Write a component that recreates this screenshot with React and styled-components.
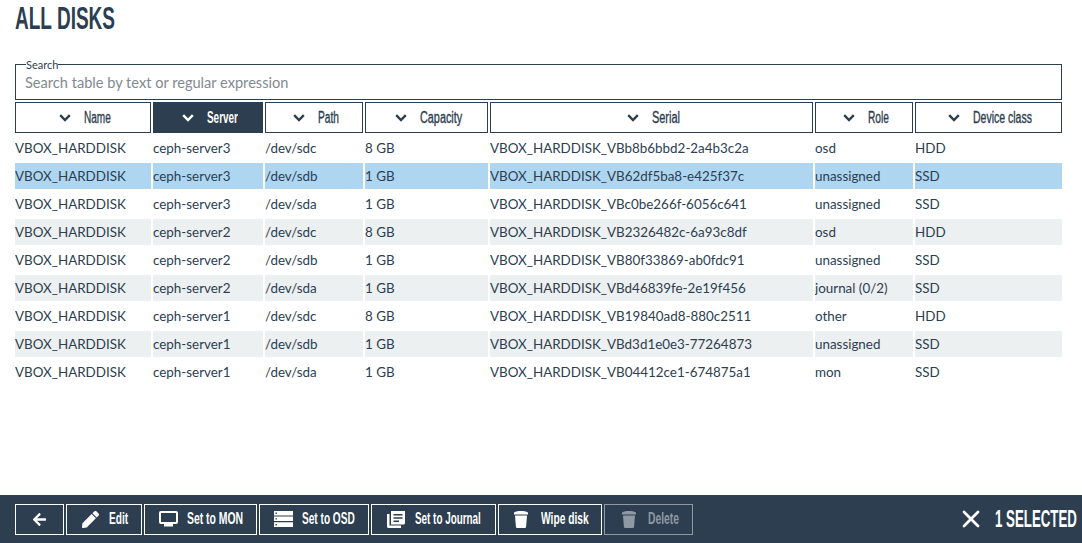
import React from "react";
import styled, { createGlobalStyle } from "styled-components";
import { FaArrowLeft, FaPen } from "react-icons/fa";
import { X } from "lucide-react";

const colors = {
	navy: "#2c3e50",
	selected: "#aed6f1",
	stripe: "#ecf0f1",
	muted: "#8f99a3"
};

const GlobalStyle = createGlobalStyle`
	html, body {
		margin: 0;
		padding: 0;
		background: #fff;
		font-family: "Lato", sans-serif;
		color: ${colors.navy};
	}
`;

const Page = styled.div`
	height: 543px;
	display: flex;
	flex-direction: column;
	overflow: hidden;
`;

const Content = styled.main`
	flex: 1;
	padding: 0 20px 0 15px;
`;

/* no condensed family is installed, so the headline font gets squeezed to its measured width */
const FitBox = styled.span`
	display: inline-block;
	flex: none;
	width: ${(p) => p.$width}px;
	white-space: nowrap;
	text-align: left;
`;

const FitInner = styled.span`
	display: inline-block;
	transform-origin: left center;
`;

const FitText = ({ width, children }) => (
	<FitBox $width={width}>
		<FitInner
			ref={(el) => {
				if (el) el.style.transform = `scaleX(${width / el.offsetWidth})`;
			}}
		>
			{children}
		</FitInner>
	</FitBox>
);

const Title = styled.h1`
	margin: 0;
	height: 59px;
	box-sizing: border-box;
	padding-top: 2px;
	font: 700 31px/34px "Liberation Sans", sans-serif;
`;

const SearchBox = styled.fieldset`
	margin: 0;
	padding: 0 9px;
	height: 41px;
	box-sizing: border-box;
	border: 1px solid ${colors.navy};
	min-width: 0;
`;

const SearchLegend = styled.legend`
	padding: 0;
	margin-left: 1px;
	font-size: 11px;
	line-height: 11px;
`;

const SearchInput = styled.input`
	display: block;
	width: 100%;
	border: 0;
	outline: 0;
	padding: 0;
	height: 24px;
	background: transparent;
	font: 400 14.6px "Lato", sans-serif;
	color: ${colors.navy};
	&::placeholder {
		color: #7f8a93;
		opacity: 1;
	}
`;

const Table = styled.table`
	table-layout: fixed;
	width: 1051px;
	margin: 0 -2px;
	border-collapse: separate;
	border-spacing: 2px;
`;

const HeaderCell = styled.th`
	height: 31px;
	box-sizing: border-box;
	padding: 0 0 0 3px;
	border: 1px solid ${colors.navy};
	background: ${(p) => (p.$active ? colors.navy : "#fff")};
	color: ${(p) => (p.$active ? "#fff" : colors.navy)};
	font: ${(p) => (p.$active ? 700 : 400)} 16px "Liberation Sans", sans-serif;
	-webkit-text-stroke: ${(p) => (p.$active ? "0" : "0.35px")};
`;

const HeaderInner = styled.span`
	display: flex;
	align-items: center;
	justify-content: center;
	gap: 13px;
`;

const Row = styled.tr`
	background: ${(p) => (p.$selected ? colors.selected : p.$striped ? colors.stripe : "#fff")};
`;

const Cell = styled.td`
	height: 26px;
	padding: 0;
	background: inherit;
	font-size: 13.4px;
	white-space: nowrap;
	overflow: hidden;
`;

const Footer = styled.footer`
	height: 48px;
	background: ${colors.navy};
	display: flex;
	align-items: center;
	justify-content: space-between;
	padding: 0 5px 0 15px;
	color: #fff;
`;

const Actions = styled.div`
	display: flex;
	gap: 2px;
`;

const ActionButton = styled.button`
	height: 31px;
	box-sizing: border-box;
	width: ${(p) => p.$width}px;
	padding: 0 0 0 ${(p) => p.$inset || 0}px;
	display: flex;
	align-items: center;
	justify-content: center;
	gap: ${(p) => p.$gap}px;
	background: transparent;
	border: 1px solid ${(p) => (p.disabled ? colors.muted : "#fff")};
	color: ${(p) => (p.disabled ? colors.muted : "#fff")};
	font: 700 16px "Liberation Sans", sans-serif;
`;

const Selection = styled.div`
	display: flex;
	align-items: center;
	gap: 10px;
	font: 700 23px "Liberation Sans", sans-serif;
`;

const SortIcon = () => (
	<svg width="12" height="8" viewBox="0 0 12 8" fill="none">
		<path d="M1.200 1.200L6 6l4.800-4.800" stroke="currentColor" strokeWidth="2.400" />
	</svg>
);

const TvIcon = () => (
	<svg width="19" height="16" viewBox="0 0 19 16" fill="none">
		<rect x="1" y="1" width="17" height="11" rx="1" stroke="currentColor" strokeWidth="2" />
		<rect x="5" y="13" width="9" height="2.500" fill="currentColor" />
	</svg>
);

const ServerIcon = () => (
	<svg width="19" height="16" viewBox="0 0 19 16">
		<path d="M0 0h19v4.400H0zM0 5.600h19v4.400H0zM0 11.200h19V16H0z" fill="currentColor" />
		<path d="M1.500 1.600h1.400v1.400H1.500zM1.500 7.200h1.400v1.400H1.500zM1.500 13h1.400v1.400H1.500z" fill="#2c3e50" />
	</svg>
);

const JournalIcon = () => (
	<svg width="18" height="17" viewBox="0 0 18 17">
		<path d="M4 0h14v12a1.500 1.500 0 0 1-1.500 1.500H4z" fill="currentColor" />
		<path d="M6.500 3h9v1.500h-9zM6.500 6.300h9v1.500h-9zM6.500 9.600h5.500v1.500h-5.500z" fill="#2c3e50" />
		<path d="M0 3h2.500v11.500H14V17H1.500A1.500 1.500 0 0 1 0 15.500z" fill="currentColor" />
	</svg>
);

const TrashIcon = () => (
	<svg width="14" height="17" viewBox="0 0 14 17">
		<path d="M0 1.600C2 .4 4.500 0 7 0s5 .4 7 1.600V3.500H0z" fill="currentColor" />
		<path d="M1 4.500h12l-.9 11.200A1.400 1.400 0 0 1 10.700 17H3.300a1.400 1.400 0 0 1-1.400-1.300z" fill="currentColor" />
	</svg>
);

const columns = [
	{ name: "Name", width: 136, textWidth: 27 },
	{ name: "Server", width: 110, textWidth: 31, active: true },
	{ name: "Path", width: 98, textWidth: 21 },
	{ name: "Capacity", width: 123, textWidth: 42 },
	{ name: "Serial", width: 323, textWidth: 28 },
	{ name: "Role", width: 98, textWidth: 21 },
	{ name: "Device class", width: 147, textWidth: 59 }
];

const disks = [
	["ceph-server3", "/dev/sdc", "8 GB", "VBb8b6bbd2-2a4b3c2a", "osd", "HDD"],
	["ceph-server3", "/dev/sdb", "1 GB", "VB62df5ba8-e425f37c", "unassigned", "SSD"],
	["ceph-server3", "/dev/sda", "1 GB", "VBc0be266f-6056c641", "unassigned", "SSD"],
	["ceph-server2", "/dev/sdc", "8 GB", "VB2326482c-6a93c8df", "osd", "HDD"],
	["ceph-server2", "/dev/sdb", "1 GB", "VB80f33869-ab0fdc91", "unassigned", "SSD"],
	["ceph-server2", "/dev/sda", "1 GB", "VBd46839fe-2e19f456", "journal (0/2)", "SSD"],
	["ceph-server1", "/dev/sdc", "8 GB", "VB19840ad8-880c2511", "other", "HDD"],
	["ceph-server1", "/dev/sdb", "1 GB", "VBd3d1e0e3-77264873", "unassigned", "SSD"],
	["ceph-server1", "/dev/sda", "1 GB", "VB04412ce1-674875a1", "mon", "SSD"]
];

const actions = [
	{ id: "back", width: 49, gap: 0, icon: <FaArrowLeft size={15} /> },
	{ id: "edit", label: "Edit", width: 76, gap: 10, inset: 2, textWidth: 19, icon: <FaPen size={17} /> },
	{ id: "mon", label: "Set to MON", width: 113, gap: 9, textWidth: 56, icon: <TvIcon /> },
	{ id: "osd", label: "Set to OSD", width: 110, gap: 9, textWidth: 53, icon: <ServerIcon /> },
	{ id: "journal", label: "Set to Journal", width: 125, gap: 10, textWidth: 66, icon: <JournalIcon /> },
	{ id: "wipe", label: "Wipe disk", width: 104, gap: 13, inset: 2, textWidth: 48, icon: <TrashIcon /> },
	{ id: "delete", label: "Delete", width: 89, gap: 12, inset: 4, textWidth: 31, icon: <TrashIcon />, disabled: true }
];

const App = () => (
	<Page>
		<GlobalStyle />
		<Content>
			<Title>
				<FitText width={100}>ALL DISKS</FitText>
			</Title>
			<SearchBox>
				<SearchLegend>Search</SearchLegend>
				<SearchInput placeholder="Search table by text or regular expression" />
			</SearchBox>
			<Table>
				<colgroup>
					{columns.map((c) => (
						<col key={c.name} width={c.width} />
					))}
				</colgroup>
				<thead>
					<tr>
						{columns.map((c) => (
							<HeaderCell key={c.name} $active={c.active}>
								<HeaderInner>
									<SortIcon />
									<FitText width={c.textWidth}>{c.name}</FitText>
								</HeaderInner>
							</HeaderCell>
						))}
					</tr>
				</thead>
				<tbody>
					{disks.map((d, i) => (
						<Row key={d[3]} $selected={i === 1} $striped={i % 2 === 1}>
							<Cell>VBOX_HARDDISK</Cell>
							<Cell>{d[0]}</Cell>
							<Cell>{d[1]}</Cell>
							<Cell>{d[2]}</Cell>
							<Cell>VBOX_HARDDISK_{d[3]}</Cell>
							<Cell>{d[4]}</Cell>
							<Cell>{d[5]}</Cell>
						</Row>
					))}
				</tbody>
			</Table>
		</Content>
		<Footer>
			<Actions>
				{actions.map((a) => (
					<ActionButton key={a.id} $width={a.width} $gap={a.gap} $inset={a.inset} disabled={a.disabled}>
						{a.icon}
						{a.label && <FitText width={a.textWidth}>{a.label}</FitText>}
					</ActionButton>
				))}
			</Actions>
			<Selection>
				<X size={28} strokeWidth={2.4} />
				<FitText width={82}>1 SELECTED</FitText>
			</Selection>
		</Footer>
	</Page>
);

export default App;
